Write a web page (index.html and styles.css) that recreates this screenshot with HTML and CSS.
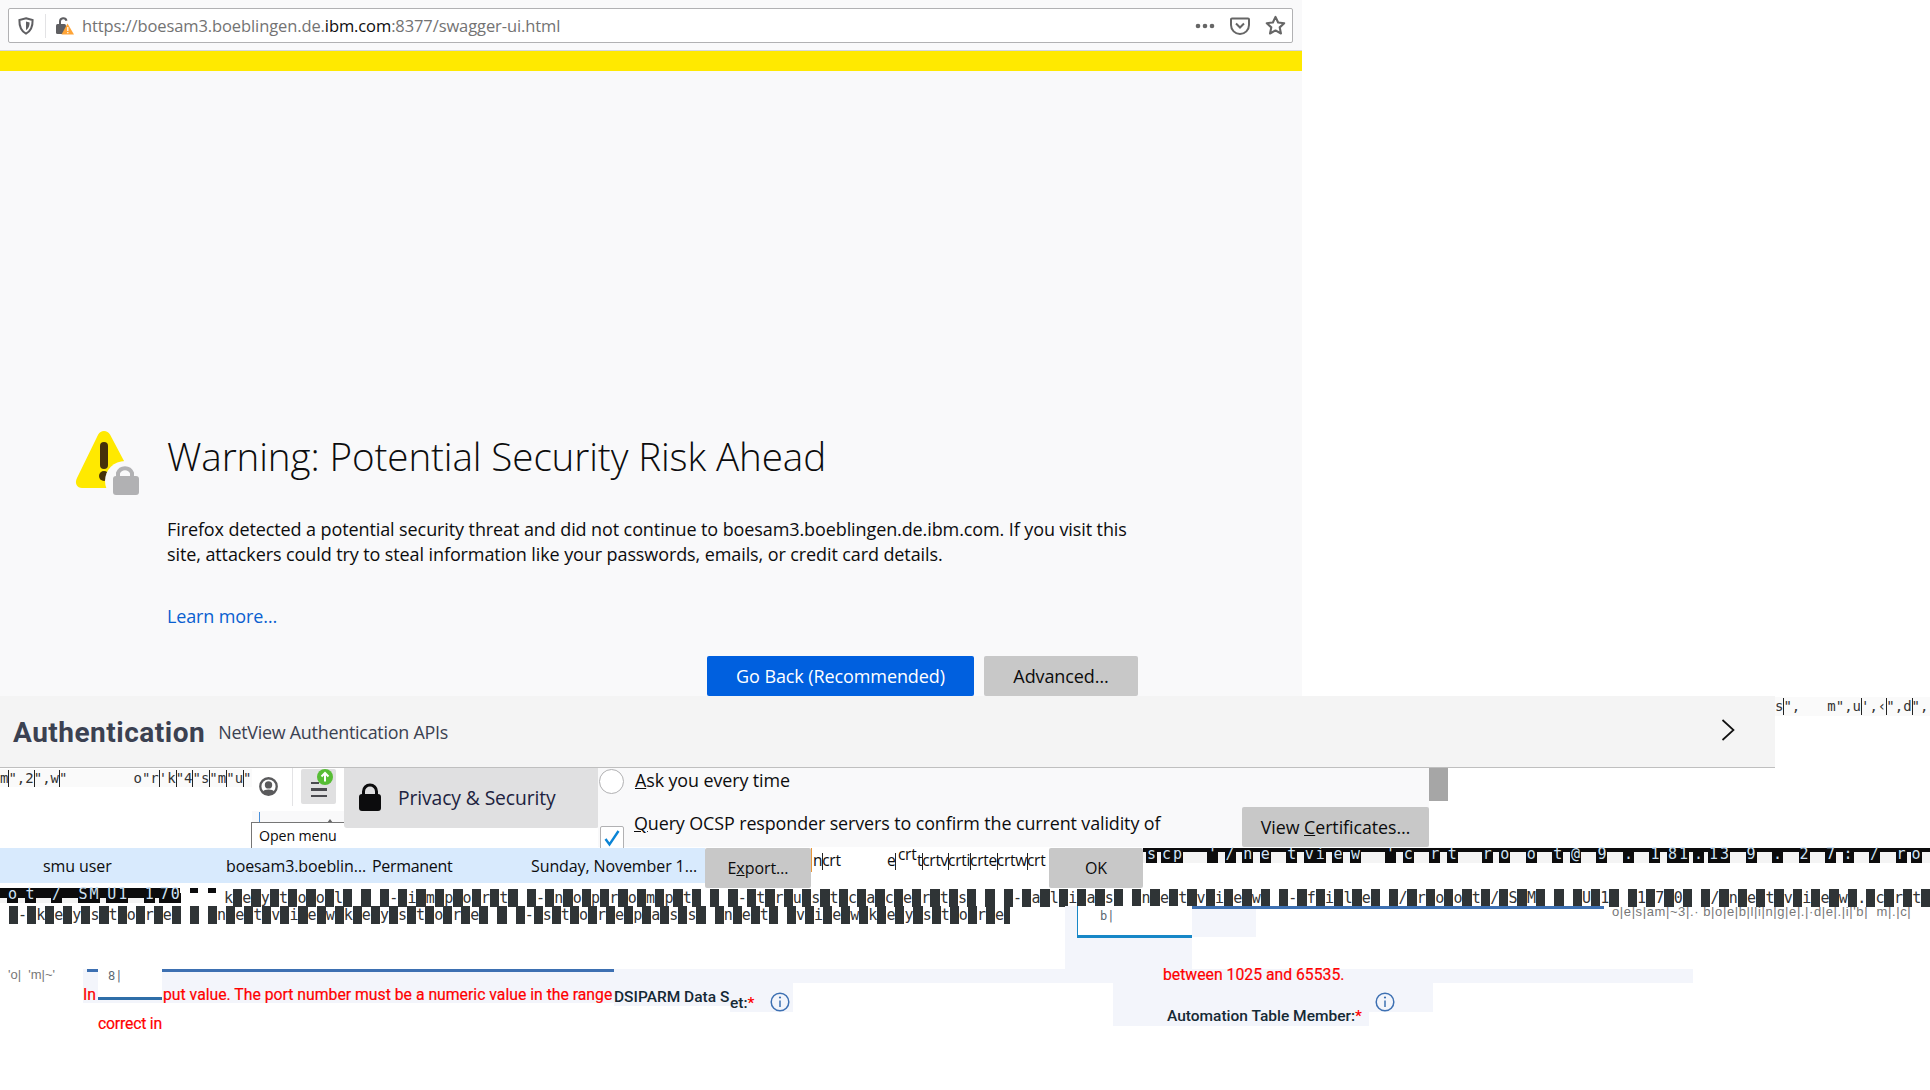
FILE: index.html
```html
<!DOCTYPE html>
<html lang="en">
<head>
<meta charset="utf-8">
<title>Warning: Potential Security Risk Ahead</title>
<link rel="stylesheet" href="styles.css">
</head>
<body>
<div class="canvas">
  <section class="browser">
    <div class="toolbar">
      <div class="urlbar">
        <svg class="ic-shield" viewBox="0 0 16 18"><path d="M8 1.2 14.6 3c.2 6.5-1.5 11-6.6 13.6C2.900 14 1.200 9.500 1.400 3Z" fill="none" stroke="#5f5f62" stroke-width="2"/><path d="M8 4.500 11.600 5.500c0 3.500-1 6-3.600 7.700Z" fill="#5f5f62"/></svg>
        <span class="url-sep"></span>
        <svg class="ic-lock" viewBox="0 0 19 19"><path d="M5 8V5.500a3.300 3.300 0 0 1 6.500-.8" fill="none" stroke="#5f5f62" stroke-width="2"/><rect x="1" y="8" width="10" height="10" rx="1.500" fill="#5f5f62"/><path d="M12.500 7.500 19 18.500H6.500Z" fill="#ffa436"/><path d="M12.800 11v4M12.800 16v1.300" stroke="#fff" stroke-width="1.200"/></svg>
        <span class="url"><span>https://boesam3.boeblingen.de.</span><b>ibm.com</b><span>:8377/swagger-ui.html</span></span>
        <svg class="ic-dots" viewBox="0 0 20 6"><circle cx="3" cy="3" r="2.300"/><circle cx="10" cy="3" r="2.300"/><circle cx="17" cy="3" r="2.300"/></svg>
        <svg class="ic-pocket" viewBox="0 0 20 18"><path d="M2 1.500h16a1 1 0 0 1 1 1V8a9 9 0 0 1-18 0V2.500a1 1 0 0 1 1-1Z" fill="none" stroke="#666" stroke-width="2"/><path d="m6 6.500 4 4 4-4" fill="none" stroke="#666" stroke-width="2"/></svg>
        <svg class="ic-star" viewBox="0 0 20 20"><path d="m10 1.800 2.500 5.300 5.800.7-4.300 4 1.200 5.800-5.200-2.900-5.200 2.900L6 11.800l-4.300-4 5.800-.7Z" fill="none" stroke="#666" stroke-width="2" stroke-linejoin="round"/></svg>
      </div>
    </div>
    <div class="yellow-bar"></div>
    <main class="error">
      <svg class="ic-warning" viewBox="0 0 70 70">
        <path d="M31 2c-2.500 0-4.500 1.300-5.800 3.600L4 49c-2.800 5.500.2 10 5 10h46c5 0 8-4.500 5-10L37 5.600C35.700 3.300 33.500 2 31 2Z" fill="#ffe900"/>
        <rect x="27" y="13" width="8" height="27" rx="4" fill="#45310a"/><circle cx="31" cy="47" r="5" fill="#45310a"/>
        <circle cx="52" cy="52" r="20" fill="#f9f9fa"/>
        <path d="M45 47v-3a7.500 7.500 0 0 1 14 0v3" fill="none" stroke="#b1b1b3" stroke-width="4"/>
        <rect x="40" y="47" width="26" height="19" rx="3" fill="#b1b1b3"/>
      </svg>
      <div class="error-body">
        <h1 class="error-title">Warning: Potential Security Risk Ahead</h1>
        <p class="error-text">Firefox detected a potential security threat and did not continue to boesam3.boeblingen.de.ibm.com. If you visit this<br>site, attackers could try to steal information like your passwords, emails, or credit card details.</p>
        <a class="learn" href="#">Learn more…</a>
        <div class="error-actions">
          <button class="btn btn-primary">Go Back (Recommended)</button>
          <button class="btn btn-grey">Advanced…</button>
        </div>
      </div>
    </main>
  </section>

  <header class="auth-bar">
    <h2 class="auth-title">Authentication</h2>
    <span class="auth-sub">NetView Authentication APIs</span>
    <svg class="ic-chevron" viewBox="0 0 14 22"><path d="m1.500 1 11 10-11 10" fill="none" stroke="#111" stroke-width="1.700"/></svg>
  </header>

  <div class="frag glitch-left">m<i class="p"></i>",2<i class="p"></i>",w<i class="p"></i>"<span class="gap"></span>o"r<i class="p"></i>'k<i class="p"></i>"4<i class="p"></i>"s<i class="p"></i>"m<i class="p"></i>"u<i class="p"></i>"</div>
  <div class="frag glitch-right">s<i class="p"></i>",<span class="gap-s"></span>m",u<i class="p"></i>',‹<i class="p"></i>",d<i class="p"></i>",</div>

  <div class="frag tool-icons">
    <svg class="ic-avatar" viewBox="0 0 18 18"><circle cx="9" cy="9" r="7.800" fill="none" stroke="#5a5a5c" stroke-width="2.200"/><circle cx="9" cy="7.500" r="3.500" fill="#5a5a5c"/><path d="M3.500 14c1.500-3 9.500-3 11 0l-3 3h-5Z" fill="#5a5a5c"/></svg>
    <span class="tool-sep"></span>
    <div class="menu-btn">
      <span class="bar"></span><span class="bar"></span><span class="bar"></span>
      <svg class="ic-badge" viewBox="0 0 16 16"><circle cx="8" cy="8" r="8" fill="#57bd35"/><path d="M8 12.500V4M4.500 7.500 8 4l3.500 3.500" fill="none" stroke="#fff" stroke-width="2"/></svg>
    </div>
  </div>
  <div class="frag small-box"><span class="small-caret"></span><span class="small-arrow"></span></div>
  <div class="frag tooltip">Open menu</div>
  <div class="frag privacy">
    <svg class="ic-bigLock" viewBox="0 0 24 28"><path d="M5.500 13V8.500a6.500 6.500 0 0 1 13 0V13" fill="none" stroke="#0c0c0d" stroke-width="3"/><rect x="1" y="11" width="22" height="17" rx="3" fill="#0c0c0d"/></svg>
    <span>Privacy &amp; Security</span>
  </div>
  <div class="frag prefs">
    <div class="pref-row pref-ask"><span class="radio"></span><span><u>A</u>sk you every time</span></div>
    <div class="pref-row pref-query"><span class="check"><svg viewBox="0 0 18 18"><path d="m2.500 10 4 5.500L15.500 2" fill="none" stroke="#0a84d6" stroke-width="2.400"/></svg></span><span><u>Q</u>uery OCSP responder servers to confirm the current validity of</span></div>
  </div>
  <div class="frag scroll-thumb"></div>
  <button class="frag btn-cert">View <u>C</u>ertificates…</button>

  <div class="frag cert-row">
    <span class="c1">smu user</span><span class="c2">boesam3.boeblin…</span><span class="c3">Permanent</span><span class="c4">Sunday, November 1…</span>
  </div>
  <button class="frag btn-export">E<u>x</u>port…</button>
  <div class="frag crt-strip"><span class="crt-n">n<i class="p"></i>crt</span><span class="crt-e">e<i class="p"></i></span><span class="crt-up">crt</span><span class="crt-rest">t<i class="p"></i>crtv<i class="p"></i>crti<i class="p"></i>crte<i class="p"></i>crtw<i class="p"></i>crt</span></div>
  <button class="frag btn-ok">OK</button>

  <div class="frag term-black line-a"><b class="pb">s</b><b class="pa">c</b><b class="pe">p</b><b>'</b><b>/</b><b>n</b><b class="pd">e</b><b>t</b><b class="pa">v</b><b>i</b><b>e</b><b class="pe">w</b><b>'</b><b class="pd">c</b><b>r</b><b class="pe">t</b><b>r</b><b class="pd">o</b><b class="pd">o</b><b>t</b><b class="pd">@</b><b class="pd">9</b><b class="pd">.</b><b>1</b><b class="pa">8</b><b class="pb">1</b><b class="pb">.</b><b class="pa">1</b><b class="pd">3</b><b class="pd">9</b><b class="pd">.</b><b class="pd">2</b><b>7</b><b class="pd">:</b><b class="pd">/</b><b class="pb">r</b><b>o</b></div>
  <div class="frag term-black line-b"><b>o</b><b class="pd">t</b><b class="pd">/</b><b class="pa">S</b><b class="pc">M</b><b class="pa">U</b><b class="pd">1</b><b class="pb">1</b><b class="pa">7</b><b>0</b></div>
  <div class="frag dashes"></div>
  <div class="frag term term-grey line-c">keytool  -import -noprompt  -trustcacerts  -alias netview -file /root/SM  U1 170 /netview.crt</div>
  <div class="frag term term-grey line-d"> -keystore  netviewkeystore  -storepass net viewkeystore</div>

  <div class="frag pale band-main"></div>
  <div class="frag pale band-input"></div>
  <div class="frag pale band-input-r"></div>
  <div class="frag pale band-left"></div>
  <div class="frag pale band-dsi"></div>
  <div class="frag pale band-dsi2"></div>
  <div class="frag pale band-auto"></div>
  <div class="frag pale band-auto2"></div>

  <div class="frag rule rule-top"></div>
  <div class="frag rule rule-low"></div>
  <div class="frag rule rule-nub"></div>

  <div class="frag input-box input-a">b|</div>
  <div class="frag input-box input-b">8|</div>

  <div class="frag thin thin-right">o|e|s|am|~3|.· b|o|e|b|l|i|n|g|e|.|·d|e|.|i|'b|  m|.|c|</div>
  <div class="frag thin thin-left">'o|  'm|~'</div>

  <div class="frag err err-a">In</div>
  <div class="frag err err-b">put value. The port number must be a numeric value in the range</div>
  <div class="frag err err-c">correct in</div>
  <div class="frag err err-d">between 1025 and 65535.</div>

  <div class="frag label label-a">DSIPARM Data S</div>
  <div class="frag label label-b">et:<i>*</i></div>
  <div class="frag label label-c">Automation Table Member:<i>*</i></div>

  <svg class="frag ic-info info-a" viewBox="0 0 20 20"><circle cx="10" cy="10" r="8.800" fill="none" stroke="#3d70b2" stroke-width="1.500"/><path d="M10 8.500v6.500" stroke="#3d70b2" stroke-width="1.500"/><circle cx="10" cy="5.500" r="1.100" fill="#3d70b2"/></svg>
  <svg class="frag ic-info info-b" viewBox="0 0 20 20"><circle cx="10" cy="10" r="8.800" fill="none" stroke="#3d70b2" stroke-width="1.500"/><path d="M10 8.500v6.500" stroke="#3d70b2" stroke-width="1.500"/><circle cx="10" cy="5.500" r="1.100" fill="#3d70b2"/></svg>
</div>
</body>
</html>
```
FILE: styles.css
```css
* { box-sizing: border-box; }
html, body { margin: 0; background: #fff; }
.canvas { position: relative; width: 1930px; height: 1090px; overflow: hidden; font-family: "Open Sans", "Noto Sans", sans-serif; color: #0c0c0d; }
.p { display: inline-block; width: 0; height: 17px; margin-right: -1px; border-left: 1px solid #222; vertical-align: -4px; }

/* browser window */
.browser { width: 1302px; height: 696px; background: #f9f9fa; display: flex; flex-direction: column; }
.toolbar { height: 51px; padding: 8px 9px 7px 8px; border-bottom: 1px solid #d7d7db; }
.urlbar { height: 35px; background: #fff; border: 1px solid #b1b1b3; border-radius: 2px; display: flex; align-items: center; padding: 0 6px 0 9px; }
.ic-shield { width: 16px; height: 18px; }
.url-sep { width: 1px; height: 24px; background: #e3e3e5; margin: 0 9px 0 11px; }
.ic-lock { width: 19px; height: 19px; }
.url { flex: 1; margin-left: 8px; font-size: 16.500px; color: #737373; white-space: nowrap; letter-spacing: -.1px; }
.url b { font-weight: 400; color: #0c0c0d; }
.ic-dots { width: 20px; height: 6px; fill: #666; margin-right: 15px; }
.ic-pocket { width: 20px; height: 18px; margin-right: 15px; }
.ic-star { width: 21px; height: 21px; }
.yellow-bar { height: 20px; background: #ffe900; }

.error { flex: 1; display: flex; padding: 358px 0 0 73px; }
.ic-warning { width: 70px; height: 70px; flex: none; }
.error-body { margin-left: 24px; width: 971px; }
.error-title { margin: -1px 0 0; font-size: 38.600px; font-weight: 300; line-height: 56px; white-space: nowrap; color: #0c0c0d; letter-spacing: -.1px; }
.error-text { margin: 33px 0 0; font-size: 18px; line-height: 25px; white-space: nowrap; color: #0c0c0d; letter-spacing: -.1px; }
.learn { display: block; margin-top: 37px; font-size: 18px; line-height: 25px; color: #0a5fd0; text-decoration: none; letter-spacing: -.13px; }
.error-actions { display: flex; justify-content: flex-end; gap: 10px; margin: 27px 0 0; width: 971px; }
.btn { height: 40px; border: 0; border-radius: 2px; font: inherit; font-size: 18px; letter-spacing: -.1px; padding: 0; }
.btn-primary { width: 267px; background: #0060df; color: #fff; }
.btn-grey { width: 154px; background: #c8c8c8; color: #0c0c0d; }

/* swagger header */
.auth-bar { width: 1775px; height: 72px; background: #f4f4f4; border-bottom: 1px solid #bfbfbf; display: flex; align-items: center; padding: 0 40px 0 13px; color: #3d3d3d; }
.auth-title { margin: 2px 0 0; font: 700 28px Roboto, sans-serif; letter-spacing: .5px; color: #3b4151; }
.auth-sub { margin-left: 13px; font-size: 17.900px; color: #3b4151; letter-spacing: -.25px; }
.ic-chevron { margin: -4px 0 0 auto; width: 14px; height: 22px; }

/* collage fragments */
.frag { position: absolute; }
.glitch-left, .glitch-right { font: 14px "DejaVu Sans Mono", monospace; color: #333; background: #fafafa; white-space: pre; }
.glitch-left { left: 0; top: 769px; width: 252px; height: 18px; line-height: 18px; }
.gap { display: inline-block; width: 66px; }
.glitch-right { left: 1775px; top: 697px; width: 155px; height: 19px; line-height: 19px; }
.gap-s { display: inline-block; width: 27px; }

.tool-icons { left: 252px; top: 768px; width: 92px; height: 43px; display: flex; align-items: flex-start; background: #fff; }
.ic-avatar { width: 19px; height: 19px; margin: 9px 0 0 7px; }
.tool-sep { width: 1px; height: 38px; background: #e3e3e5; margin-left: 14px; }
.menu-btn { position: relative; width: 35px; height: 35px; margin: 1px 0 0 8px; background: #e0e0e1; border-radius: 2px; display: flex; flex-direction: column; align-items: center; justify-content: center; gap: 4px; padding-top: 6px; }
.bar { display: block; width: 16px; height: 2.500px; background: #4a4a4f; }
.bar:first-child { width: 8px; margin-right: 8px; }
.ic-badge { position: absolute; right: 3px; top: 0; width: 16px; height: 16px; }
.small-box { left: 252px; top: 811px; width: 92px; height: 12px; background: #f9f9fa; }
.small-caret { position: absolute; left: 7px; top: 1px; width: 1px; height: 10px; background: #4a90d9; }
.small-arrow { position: absolute; left: 75px; top: 8px; border: 3px solid transparent; border-bottom: 4px solid #666; border-top: 0; }
.tooltip { left: 251px; top: 822px; width: 347px; height: 26px; background: #fff; border-left: 1px solid #767676; border-top: 1px solid #767676; font-size: 14.200px; line-height: 25px; padding-left: 7px; letter-spacing: -.1px; }
.privacy { left: 344px; top: 768px; width: 255px; height: 60px; background: #e0e0e1; border-radius: 0 0 3px 3px; display: flex; align-items: center; gap: 16px; padding: 0 0 2px 14px; font-size: 19.300px; color: #202340; }
.ic-bigLock { width: 24px; height: 28px; }
.privacy span { letter-spacing: -.1px; }

.prefs { left: 598px; top: 768px; width: 831px; height: 79px; background: #f9f9fa; font-size: 17.900px; color: #0c0c0d; letter-spacing: -.1px; }
.pref-row { position: relative; display: flex; align-items: center; white-space: nowrap; }
.pref-ask { height: 26px; gap: 11px; padding-left: 1px; margin-top: -1px; }
.pref-query { height: 28px; margin-top: 16px; gap: 11px; padding-left: 36px; }
.radio { width: 25px; height: 25px; border: 1px solid #b1b1b3; border-radius: 50%; background: #fff; margin-top: 2px; }
.check { position: absolute; left: 2px; top: 17px; width: 24px; height: 24px; border: 1px solid #b1b1b3; border-radius: 2px; background: #fff; display: flex; align-items: center; justify-content: center; }
.check svg { width: 18px; height: 18px; }
.scroll-thumb { left: 1429px; top: 768px; width: 19px; height: 33px; background: #a6a6a6; }
.btn-cert, .btn-export, .btn-ok { background: #c8c8c8; border: 0; border-radius: 2px; font: inherit; font-size: 17.800px; padding: 0; color: #0c0c0d; letter-spacing: -.05px; }
.btn-cert { left: 1242px; top: 807px; width: 187px; height: 40px; }
.btn-export { left: 705px; top: 848px; width: 106px; height: 40px; font-size: 16px; }
.btn-ok { left: 1049px; top: 848px; width: 94px; height: 40px; font-size: 16px; }

.cert-row { left: 0; top: 848px; width: 705px; height: 35px; background: #d8eafd; font-size: 16px; line-height: 37px; color: #0c0c0d; letter-spacing: -.1px; }
.cert-row span { position: absolute; top: 0; white-space: nowrap; }
.c1 { left: 43px; } .c2 { left: 226px; } .c3 { left: 372px; letter-spacing: -.3px; } .c4 { left: 531px; }

.crt-strip { left: 811px; top: 848px; width: 238px; height: 24px; font-size: 15.500px; line-height: 24px; border-left: 1px solid #e8963a; white-space: nowrap; letter-spacing: -.3px; }
.crt-strip span { position: absolute; top: 0; }
.crt-n { left: 1px; } .crt-e { left: 75px; } .crt-strip .crt-up { left: 86px; top: -6px; } .crt-rest { left: 105px; }

/* scrambled terminal lines */
.term { font: 15px/18px "DejaVu Sans Mono", monospace; white-space: pre; color: #333; }
.term-black { display: flex; height: 15px; font: 15px/13px "DejaVu Sans Mono", monospace; color: #cfe3f5; }
.term-black b { flex: none; width: 11px; height: 15px; margin-right: 6.600px; background: #0c0c0d; font-weight: 400; text-align: center; }
.term-black b.pa { margin-right: 0; }
.term-black b.pb { margin-right: 4px; }
.term-black b.pc { margin-right: 6.600px; }
.term-black b.pd { margin-right: 15.500px; }
.term-black b.pe { margin-right: 24px; }
.line-a { left: 1143px; top: 848px; width: 787px; padding-left: 3px; background: linear-gradient(#0c0c0d, #0c0c0d) top / 100% 4px no-repeat, #f4f4f4; }
.line-b { left: 0; top: 888px; width: 180px; padding-left: 7px; background: linear-gradient(#0c0c0d, #0c0c0d) top / 100% 10px no-repeat, #f4f4f4; }
.dashes { left: 180px; top: 888px; width: 45px; height: 5px; background: repeating-linear-gradient(90deg, #fff 0 10px, #0c0c0d 10px 18px); }
.line-c { left: 224px; top: 889px; width: 1706px; height: 18px; letter-spacing: 9.320px; background: repeating-linear-gradient(90deg, transparent 0 9px, #2f3436 9px 18.350px); }
.line-d { left: 0; top: 906px; width: 1010px; height: 18px; letter-spacing: 9.060px; background: repeating-linear-gradient(90deg, transparent 0 9px, #2f3436 9px 18.090px); }

.pale { background: #f3f5fb; }
.band-main { left: 600px; top: 969px; width: 1093px; height: 14px; }
.band-input { left: 1065px; top: 906px; width: 127px; height: 63px; }
.band-input-r { left: 1192px; top: 908px; width: 64px; height: 29px; }
.band-left { left: 83px; top: 969px; width: 531px; height: 34px; }
.band-dsi { left: 614px; top: 983px; width: 179px; height: 23px; }
.band-dsi2 { left: 730px; top: 1006px; width: 63px; height: 6px; }
.band-auto { left: 1113px; top: 983px; width: 320px; height: 29px; }
.band-auto2 { left: 1113px; top: 1012px; width: 256px; height: 14px; }

.rule { height: 3px; background: #3d70b2; }
.rule-top { left: 1192px; top: 906px; width: 412px; }
.rule-low { left: 162px; top: 969px; width: 452px; }
.rule-nub { left: 87px; top: 969px; width: 11px; }

.input-box { background: #fff; border-bottom: 3px solid #1787c7; color: #5a6872; font: 12px/20px "DejaVu Sans Mono", monospace; }
.input-a { left: 1077px; top: 906px; width: 115px; height: 32px; border-left: 1px solid #1787c7; padding-left: 22px; }
.input-b { left: 98px; top: 969px; width: 64px; height: 31px; padding-left: 10px; line-height: 14px; border-bottom-color: #2e6ea8; }

.thin { font: 13px "Liberation Sans", sans-serif; color: #777; white-space: pre; }
.thin-right { left: 1612px; top: 904px; letter-spacing: .6px; }
.thin-left { left: 8px; top: 967px; }

.err { font: 400 15.770px/20px Roboto, sans-serif; color: #f00; white-space: nowrap; -webkit-text-stroke: .2px #f00; }
.err-a { left: 83px; top: 985px; }
.err-b { left: 163px; top: 985px; width: 451px; }
.err-c { left: 98px; top: 1014px; width: 66px; height: 20px; background: #fff; letter-spacing: -.2px; }
.err-d { left: 1163px; top: 965px; }

.label { font: 500 15.500px/18px Roboto, sans-serif; color: #152935; white-space: nowrap; }
.label i { font-style: normal; color: #f00; }
.label-a { left: 614px; top: 988px; }
.label-b { left: 730px; top: 994px; }
.label-c { left: 1167px; top: 1007px; }
.ic-info { width: 20px; height: 20px; top: 992px; }
.info-a { left: 770px; }
.info-b { left: 1375px; }
```
